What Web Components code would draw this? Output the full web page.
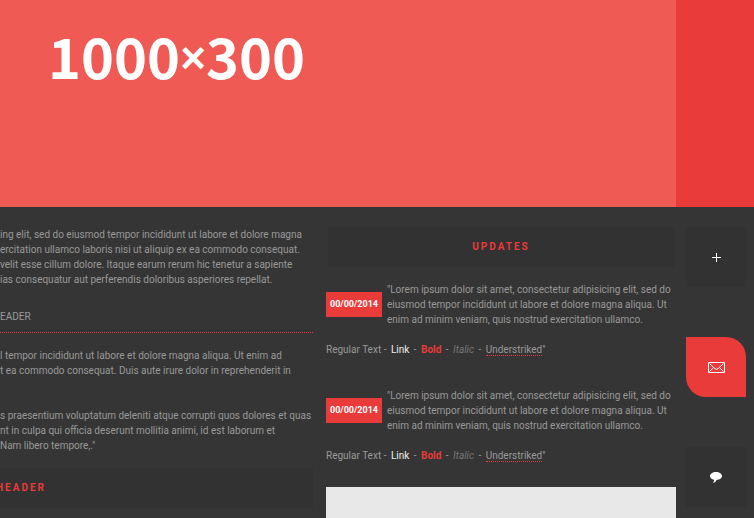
<!DOCTYPE html>
<html lang="en">
<head>
<meta charset="utf-8">
<title>Updates</title>
<style>
:root{--bg:#353535;--panel:#323232;--red:#e93b3a;--coral:#f05a54;--text:#999;--bright:#eee}
html{min-height:100%;background:var(--bg)}
body{margin:0;height:100vh;overflow:hidden;background:var(--bg);color:var(--text);font:10px/15px Roboto,"Open Sans",sans-serif}
</style>
</head>
<body>
<blog-page></blog-page>
<script>
const define=(name,html)=>{
  const t=document.createElement('template');
  t.innerHTML=html;
  customElements.define(name,class extends HTMLElement{
    constructor(){super();this.attachShadow({mode:'open'}).append(t.content.cloneNode(true));}
  });
};

define('hero-banner',`
<style>
:host{display:flex;height:207px;background:var(--red)}
.image{flex:1;margin-right:78px;background:var(--coral);padding:20px 48px;box-sizing:border-box;color:#fff;font:700 56px/70px "Noto Sans CJK SC",sans-serif;white-space:nowrap}
::slotted(span){font:700 44px/44px "Liberation Sans",sans-serif;vertical-align:6px}
</style>
<div class="image"><slot></slot></div>`);

define('panel-title',`
<style>
:host{display:block;background:var(--panel);text-align:center}
h2{margin:0;font-size:10px;line-height:40px;font-weight:700;letter-spacing:2px;color:var(--red)}
</style>
<h2><slot></slot></h2>`);

define('sub-title',`
<style>
:host{display:block;border-bottom:1px dotted var(--red)}
h3{margin:0;font-size:10px;line-height:30px;font-weight:400}
</style>
<h3><slot></slot></h3>`);

define('text-block',`
<style>
:host{display:block;white-space:nowrap}
p{margin:0}
</style>
<p><slot></slot></p>`);

define('update-entry',`
<style>
:host{display:flex;flex-direction:column;gap:15px}
.row{display:flex;align-items:center;gap:5px}
time{flex:none;width:56px;background:var(--red);color:#fff;font-size:9px;font-weight:700;line-height:25px;text-align:center}
p{margin:0;white-space:nowrap}
a,b,i{margin:0 2px}
a{color:var(--bright);text-decoration:none}
b{color:var(--red)}
i{color:#777}
u{margin-left:2px;text-decoration:none;border-bottom:1px dotted var(--red)}
</style>
<div class="row"><time>00/00/2014</time><p><slot></slot></p></div>
<p>Regular Text - <a href="#link">Link</a> - <b>Bold</b> - <i>Italic</i> - <u>Understriked</u>"</p>`);

define('rail-button',`
<style>
:host{display:block}
button{display:grid;place-items:center;width:60px;height:60px;padding:0;border:0;background:var(--panel);color:#fff;cursor:pointer}
:host([active]) button{background:var(--red);border-radius:0 20px 0 20px}
</style>
<button type="button"><slot></slot></button>`);

define('side-rail',`
<style>
:host{display:flex;flex-direction:column;gap:50px}
svg{display:block}
</style>
<rail-button><svg role="img" aria-label="Add" width="10" height="10" viewBox="0 0 10 10" shape-rendering="crispEdges"><path d="M5 1h1v9H5zM1 5h9v1H1z" fill="#fff"/></svg></rail-button>
<rail-button active><svg role="img" aria-label="Mail" width="17" height="11" viewBox="0 0 17 11" fill="none" stroke="#fff"><path d="M.5 .5h16v10H.5z"/><path d="M1.5 1.5L7 6.7Q8.5 8 10 6.7L15.500 1.500M1.500 9.500L5.500 5.700M15.500 9.500L11.500 5.700"/></svg></rail-button>
<rail-button><svg role="img" aria-label="Comment" width="12" height="12" viewBox="0 0 12 12" fill="#fff"><path d="M6 1C9.400 1 12 2.700 12 5S9.500 8.800 6.600 8.900C6 10.500 4.800 11.500 3 11.900C3.900 10.900 4.200 9.900 4 8.800C1.600 8.300 0 6.900 0 5C0 2.700 2.600 1 6 1z"/></svg></rail-button>`);

define('blog-page',`
<style>
:host{display:block}
main{display:grid;grid-template-columns:minmax(0,313fr) minmax(0,363fr) 70px;padding:20px 8px 0 0}
article{display:flex;flex-direction:column;gap:15px;overflow:hidden}
.spaced{margin-top:15px}
.bleed{text-align:left;margin-left:-4px}
.updates{margin-left:13px}
.updates panel-title{margin:0 2px 15px}
update-entry+update-entry{margin-top:31px}
.thumb{margin-top:24px;height:120px;background:#e8e8e8}
side-rail{margin-left:10px}
</style>
<hero-banner>1000<span>×</span>300</hero-banner>
<main>
<article>
<text-block>ing elit, sed do eiusmod tempor incididunt ut labore et dolore magna<br>ercitation ullamco laboris nisi ut aliquip ex ea commodo consequat.<br>velit esse cillum dolore. Itaque earum rerum hic tenetur a sapiente<br>ias consequatur aut perferendis doloribus asperiores repellat.</text-block>
<sub-title>EADER</sub-title>
<text-block>l tempor incididunt ut labore et dolore magna aliqua. Ut enim ad<br>t ea commodo consequat. Duis aute irure dolor in reprehenderit in</text-block>
<text-block class="spaced">s praesentium voluptatum deleniti atque corrupti quos dolores et quas<br>nt in culpa qui officia deserunt mollitia animi, id est laborum et<br>Nam libero tempore,."</text-block>
<panel-title class="bleed">HEADER</panel-title>
</article>
<section class="updates">
<panel-title>UPDATES</panel-title>
<update-entry>"Lorem ipsum dolor sit amet, consectetur adipisicing elit, sed do<br>eiusmod tempor incididunt ut labore et dolore magna aliqua. Ut<br>enim ad minim veniam, quis nostrud exercitation ullamco.</update-entry>
<update-entry>"Lorem ipsum dolor sit amet, consectetur adipisicing elit, sed do<br>eiusmod tempor incididunt ut labore et dolore magna aliqua. Ut<br>enim ad minim veniam, quis nostrud exercitation ullamco.</update-entry>
<div class="thumb"></div>
</section>
<side-rail></side-rail>
</main>`);
</script>
</body>
</html>
